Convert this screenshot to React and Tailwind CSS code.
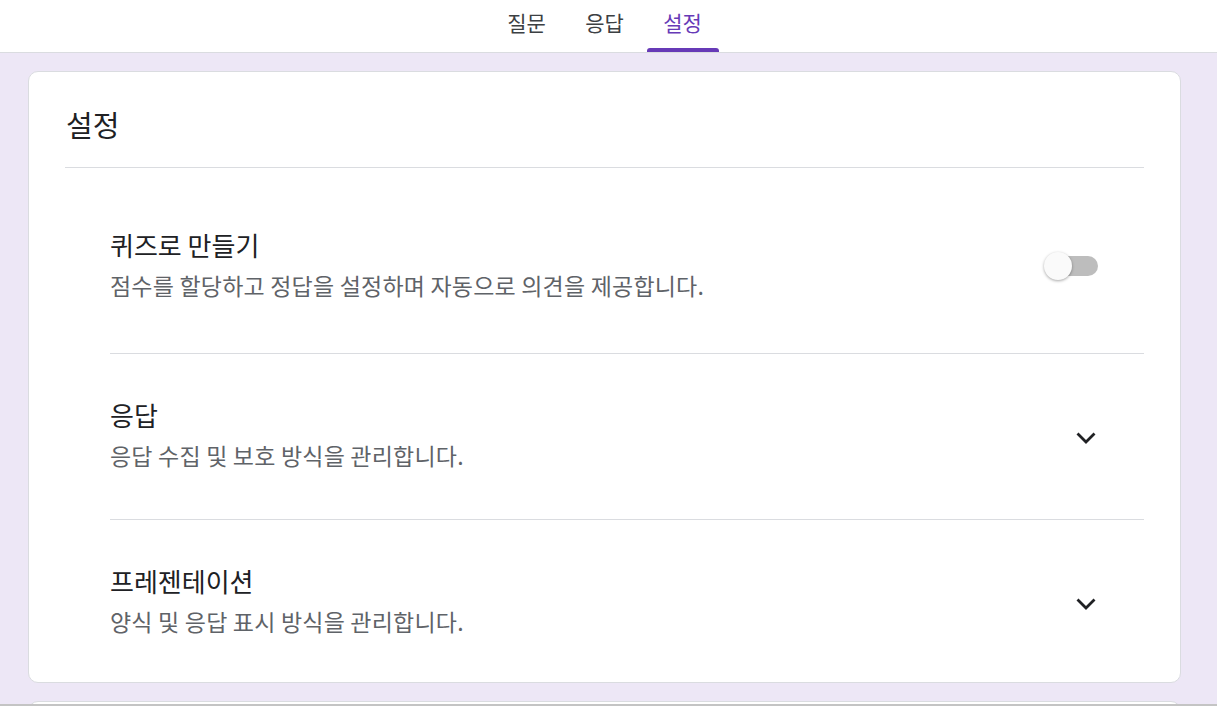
import React, { useState } from 'react';

const font = { fontFamily: '"Noto Sans CJK KR", "Noto Sans", sans-serif' };

const tabs = ['질문', '응답', '설정'];

const Chevron = () => (
  <svg width="22" height="14" viewBox="0 0 22 14" fill="none">
    <polyline points="2.5,2.5 11,11 19.5,2.5" stroke="#202124" strokeWidth="2.8" />
  </svg>
);

const Toggle = ({ on, onClick }) => (
  <button type="button" onClick={onClick} className="relative w-[50px] h-[20px] rounded-full bg-[#bdbdbd]">
    <span
      className={`absolute top-[-4px] w-[28px] h-[28px] rounded-full bg-[#fafafa] shadow-[0_1px_3px_rgba(0,0,0,0.35)] ${on ? 'left-[26px]' : 'left-[-4px]'}`}
    />
  </button>
);

const SettingRow = ({ title, desc, right, first, last }) => (
  <div
    className={`flex items-center justify-between ${first ? 'pt-[61px] pb-[52px]' : last ? 'pt-[45px] pb-[45px]' : 'pt-[45px] pb-[48px]'} ${last ? '' : 'border-b border-[#dadce0]'}`}
  >
    <div className="flex flex-col gap-[8px]">
      <div className="text-[26px] leading-[32px] text-[#202124]">{title}</div>
      <div className="text-[23px] leading-[32px] tracking-[0.2px] text-[#5f6368]">{desc}</div>
    </div>
    {right}
  </div>
);

export default function App() {
  const [quiz, setQuiz] = useState(false);

  return (
    <div className="h-[706px] overflow-hidden bg-[#ede7f6]" style={font}>
      <div className="bg-white border-b border-[#dadce0] h-[53px] pr-[8px] flex justify-center gap-[6px]">
        {tabs.map((t) => (
          <div key={t} className="relative w-[72px] flex justify-center pt-[7px]">
            <span className={`text-[21px] leading-[30px] ${t === '설정' ? 'text-[#673ab7]' : 'text-[#3c4043]'}`}>{t}</span>
            {t === '설정' && (
              <span className="absolute bottom-[0px] left-0 right-0 h-[4px] rounded-t-[3px] bg-[#673ab7]" />
            )}
          </div>
        ))}
      </div>

      <div className="pr-[8px]">
        <div className="mx-[28px] mt-[18px] bg-white border border-[#dadce0] rounded-[10px] px-[36px]">
          <div className="pt-[34px] pb-[25px] pl-[1px] border-b border-[#dadce0] text-[29px] leading-[36px] text-[#202124]">
            설정
          </div>
          <div className="ml-[45px]">
            <SettingRow
              first
              title="퀴즈로 만들기"
              desc="점수를 할당하고 정답을 설정하며 자동으로 의견을 제공합니다."
              right={<div className="mr-[46px] mt-[2px] flex"><Toggle on={quiz} onClick={() => setQuiz(!quiz)} /></div>}
            />
            <SettingRow
              title="응답"
              desc="응답 수집 및 보호 방식을 관리합니다."
              right={<div className="mr-[47px] pt-[6px] flex"><Chevron /></div>}
            />
            <SettingRow
              last
              title="프레젠테이션"
              desc="양식 및 응답 표시 방식을 관리합니다."
              right={<div className="mr-[47px] pt-[5px] flex"><Chevron /></div>}
            />
          </div>
        </div>

        <div className="mx-[28px] mt-[18px] h-[40px] bg-white border border-[#dadce0] rounded-t-[10px]" />
      </div>
      <div className="fixed bottom-0 left-0 right-0 h-[2px] bg-[#c4c4c4]" />
    </div>
  );
}
